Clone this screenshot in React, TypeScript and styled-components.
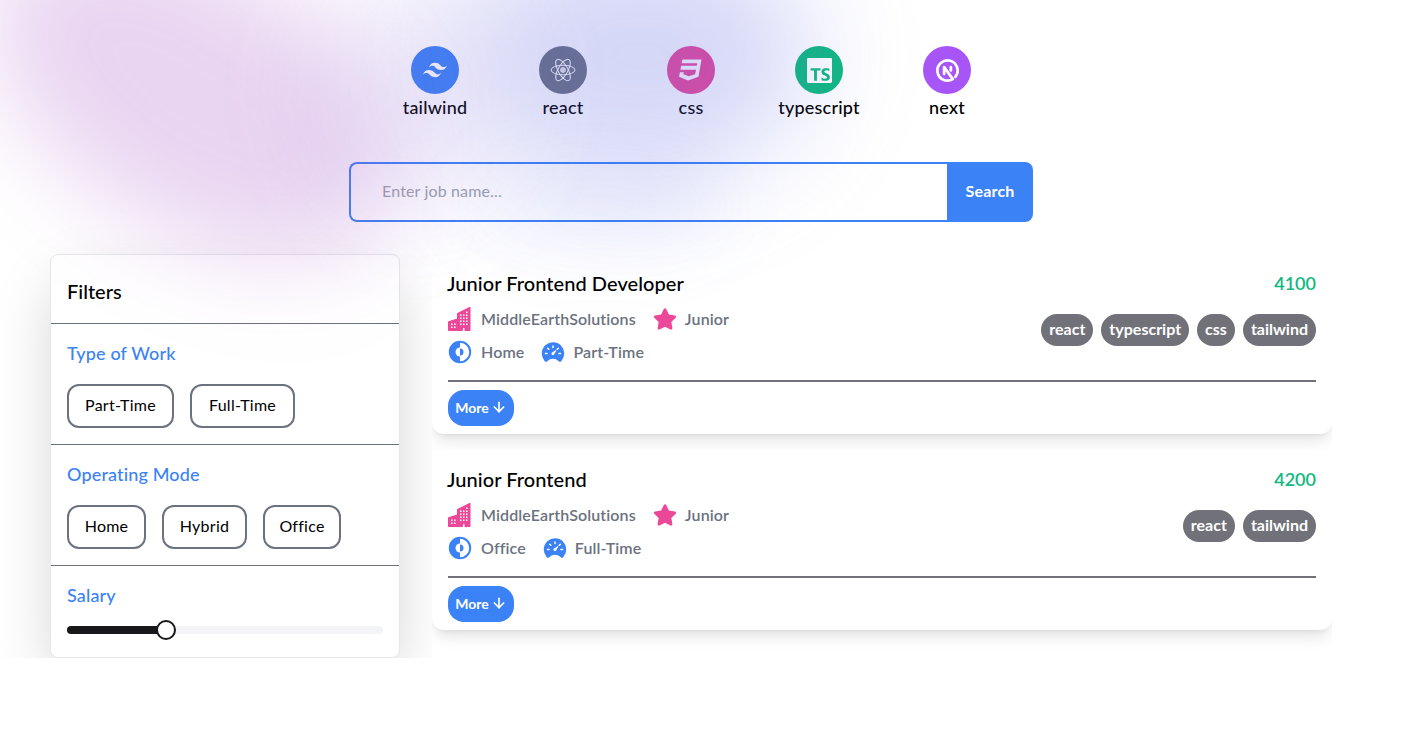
import React from "react";
import styled, { createGlobalStyle } from "styled-components";
import { SiTailwindcss, SiTypescript } from "react-icons/si";
import { FaCss3, FaStar } from "react-icons/fa";
import { TbBrandNextjs } from "react-icons/tb";
import { BsBuildingsFill } from "react-icons/bs";
import { IoSpeedometer } from "react-icons/io5";
import { ArrowDown } from "lucide-react";

const Global = createGlobalStyle`
  html, body { margin: 0; padding: 0; background: #fff; }
  body { font-family: "Lato", "Noto Sans", sans-serif; color: #000; }
  * { box-sizing: border-box; }
`;

const Page = styled.div`
  position: relative;
  width: 1382px;
  height: 658px;
  overflow: hidden;
  padding-top: 46px;
`;

const Blobs = styled.div`
  position: absolute;
  inset: 0;
  pointer-events: none;
  z-index: 5;
  overflow: hidden;
`;

const PinkBlob = styled.div`
  position: absolute;
  left: -35px;
  top: -35px;
  width: 450px;
  height: 260px;
  border-radius: 50%;
  transform: rotate(33deg);
  background: rgba(168, 85, 199, 0.25);
  filter: blur(48px);
`;

const MidBlob = styled.div`
  position: absolute;
  left: 320px;
  top: -30px;
  width: 190px;
  height: 240px;
  border-radius: 50%;
  background: rgba(130, 100, 220, 0.13);
  filter: blur(50px);
`;

const BlueBlob = styled.div`
  position: absolute;
  left: 470px;
  top: -70px;
  width: 340px;
  height: 250px;
  border-radius: 50%;
  background: rgba(91, 99, 224, 0.26);
  filter: blur(55px);
`;

const BlueTail = styled.div`
  position: absolute;
  left: 470px;
  top: 160px;
  width: 260px;
  height: 90px;
  border-radius: 50%;
  background: rgba(91, 99, 224, 0.08);
  filter: blur(35px);
`;

const TechRow = styled.div`
  display: flex;
  justify-content: center;
`;

const TechItem = styled.div`
  width: 128px;
  display: flex;
  flex-direction: column;
  align-items: center;
`;

const TechCircle = styled.div<{ $bg: string }>`
  width: 48px;
  height: 48px;
  border-radius: 50%;
  background: ${(p) => p.$bg};
  color: #fff;
  display: flex;
  align-items: center;
  justify-content: center;
`;

const TechLabel = styled.span`
  font-size: 18px;
  line-height: 26px;
  margin-bottom: 2px;
  font-weight: 500;
  letter-spacing: 0.2px;
  white-space: nowrap;
`;

const SearchBar = styled.form`
  display: flex;
  width: 684px;
  height: 60px;
  margin: 40px auto 32px;
`;

const SearchInput = styled.input`
  flex: 1;
  min-width: 0;
  border: 2px solid #3b82f6;
  border-right: none;
  border-radius: 8px 0 0 8px;
  padding: 0 32px 3px 31px;
  font: inherit;
  font-size: 16px;
  letter-spacing: 0.15px;
  background: #fff;
  outline: none;
  &::placeholder { color: #9ca3af; }
`;

const SearchButton = styled.button`
  width: 86px;
  border: none;
  border-radius: 0 8px 8px 0;
  background: #3b82f6;
  color: #fff;
  font: inherit;
  font-size: 16px;
  font-weight: 700;
  letter-spacing: 0.2px;
  padding: 0 0 3px;
`;

const Main = styled.div`
  display: flex;
  padding-left: 50px;
  gap: 32px;
  height: 404px;
`;

const Sidebar = styled.aside`
  width: 350px;
  height: 404px;
  flex: none;
  background: #fff;
  border: 1px solid #e5e7eb;
  border-radius: 8px;
  box-shadow: 0 25px 60px -8px rgba(0, 0, 0, 0.2);
`;

const SidebarTitle = styled.h2`
  margin: 0;
  height: 69px;
  padding: 22px 16px 0;
  font-size: 20px;
  line-height: 28px;
  font-weight: 500;
  border-bottom: 1px solid #6b7280;
`;

const Section = styled.section<{ $last?: boolean }>`
  height: ${(p) => (p.$last ? "auto" : "121px")};
  padding: 16px 16px 0;
  border-bottom: ${(p) => (p.$last ? "none" : "1px solid #6b7280")};
`;

const SectionTitle = styled.h3`
  margin: 0 0 18px;
  font-size: 18px;
  line-height: 26px;
  font-weight: 500;
  letter-spacing: 0.15px;
  color: #3b82f6;
`;

const Options = styled.div`
  display: flex;
  gap: 16px;
`;

const Option = styled.button<{ $w: number }>`
  width: ${(p) => p.$w}px;
  height: 44px;
  background: #fff;
  border: 2px solid #6b7280;
  border-radius: 12px;
  color: #000;
  font: inherit;
  font-size: 16px;
  letter-spacing: 0.25px;
  padding: 0 0 3px;
`;

const SliderTrack = styled.div`
  position: relative;
  width: 316px;
  height: 8px;
  border-radius: 4px;
  background: #f3f4f6;
`;

const SliderFill = styled.div`
  height: 100%;
  border-radius: 4px 0 0 4px;
  background: #18181b;
`;

const SliderThumb = styled.div`
  position: absolute;
  top: -6px;
  width: 20px;
  height: 20px;
  margin-left: -10px;
  border-radius: 50%;
  background: #fff;
  border: 2px solid #18181b;
`;

const JobList = styled.div`
  width: 900px;
  flex: none;
  height: 404px;
  overflow: hidden;
  background: #fff;
  display: flex;
  flex-direction: column;
  gap: 16px;
`;

const Card = styled.article`
  height: 180px;
  flex: none;
  background: #fff;
  border-radius: 12px;
  padding: 16px 16px 8px;
  box-shadow: 0 10px 15px -3px rgba(0, 0, 0, 0.1), 0 4px 6px -4px rgba(0, 0, 0, 0.1);
`;

const CardHead = styled.div`
  display: flex;
  justify-content: space-between;
  height: 28px;
  line-height: 26px;
`;

const JobTitle = styled.h4`
  margin: 0 0 0 -1px;
  font-size: 20px;
  font-weight: 500;
  letter-spacing: 0.06px;
`;

const Salary = styled.span`
  font-size: 18px;
  font-weight: 600;
  color: #10b981;
`;

const CardBody = styled.div`
  display: flex;
  justify-content: space-between;
  align-items: flex-start;
  height: 84px;
  border-bottom: 2px solid #71717a;
`;

const Meta = styled.div`
  display: flex;
  flex-direction: column;
  gap: 9px;
  padding-top: 9px;
`;

const MetaRow = styled.div`
  display: flex;
  align-items: center;
  gap: 17px;
  height: 24px;
`;

const MetaItem = styled.div`
  display: flex;
  align-items: center;
  gap: 8px;
  font-size: 16px;
  font-weight: 600;
  letter-spacing: 0.12px;
  color: #6b7280;
`;

const MetaText = styled.span<{ $lead?: boolean }>`
  display: block;
  margin-top: -2px;
  margin-left: ${(p) => (p.$lead ? "1px" : "0")};
`;

const Tags = styled.div`
  display: flex;
  gap: 8px;
  margin-top: 16px;
`;

const Tag = styled.span`
  height: 32px;
  line-height: 30px;
  padding: 0 8px;
  border-radius: 16px;
  background: #71717a;
  color: #fff;
  font-size: 16px;
  font-weight: 700;
`;

const MoreButton = styled.button`
  display: flex;
  align-items: center;
  justify-content: center;
  gap: 2px;
  width: 66px;
  height: 36px;
  margin-top: 8px;
  padding: 0 0 2px;
  border: none;
  border-radius: 16px;
  background: #3b82f6;
  color: #fff;
  font: inherit;
  font-size: 14px;
  font-weight: 700;
`;

const ReactAtom = () => (
  <svg width="28" height="28" viewBox="0 0 28 28" fill="none" stroke="#fff" strokeWidth="1">
    <ellipse cx="14" cy="14" rx="12" ry="4.8" />
    <ellipse cx="14" cy="14" rx="12" ry="4.8" transform="rotate(60 14 14)" />
    <ellipse cx="14" cy="14" rx="12" ry="4.8" transform="rotate(120 14 14)" />
    <circle cx="14" cy="14" r="2.4" fill="#fff" fillOpacity=".75" />
  </svg>
);

const ModeIcon = () => (
  <svg width="24" height="24" viewBox="0 0 24 24">
    <circle cx="12" cy="12" r="10.2" fill="#fff" stroke="#3b82f6" strokeWidth="2" />
    <path d="M12 2a10 10 0 0 0 0 20Z" fill="#3b82f6" />
    <path d="M12 7.5a4.5 4.5 0 0 0 0 9Z" fill="#fff" />
    <path d="M12 8.5a3.5 3.5 0 0 1 0 7Z" fill="#3b82f6" />
  </svg>
);

const techs = [
  { name: "tailwind", bg: "#3b82f6", icon: <SiTailwindcss size={24} /> },
  { name: "react", bg: "#6b7280", icon: <ReactAtom /> },
  { name: "css", bg: "#ec4899", icon: <FaCss3 size={24} /> },
  { name: "typescript", bg: "#10b981", icon: <SiTypescript size={25} /> },
  { name: "next", bg: "#a855f7", icon: <TbBrandNextjs size={27} strokeWidth={2.4} /> },
];

const jobs = [
  { title: "Junior Frontend Developer", salary: 4100, mode: "Home", type: "Part-Time", tags: ["react", "typescript", "css", "tailwind"] },
  { title: "Junior Frontend", salary: 4200, mode: "Office", type: "Full-Time", tags: ["react", "tailwind"] },
];

export default function App() {
  return (
    <Page>
      <Global />
      <TechRow>
        {techs.map((t) => (
          <TechItem key={t.name}>
            <TechCircle $bg={t.bg}>{t.icon}</TechCircle>
            <TechLabel>{t.name}</TechLabel>
          </TechItem>
        ))}
      </TechRow>
      <SearchBar>
        <SearchInput placeholder="Enter job name..." />
        <SearchButton type="button">Search</SearchButton>
      </SearchBar>
      <Main>
        <Sidebar>
          <SidebarTitle>Filters</SidebarTitle>
          <Section>
            <SectionTitle>Type of Work</SectionTitle>
            <Options>
              <Option $w={107}>Part-Time</Option>
              <Option $w={105}>Full-Time</Option>
            </Options>
          </Section>
          <Section>
            <SectionTitle>Operating Mode</SectionTitle>
            <Options>
              <Option $w={79}>Home</Option>
              <Option $w={85}>Hybrid</Option>
              <Option $w={78}>Office</Option>
            </Options>
          </Section>
          <Section $last>
            <SectionTitle>Salary</SectionTitle>
            <SliderTrack>
              <SliderFill style={{ width: "31.3%" }} />
              <SliderThumb style={{ left: "31.3%" }} />
            </SliderTrack>
          </Section>
        </Sidebar>
        <JobList>
          {jobs.map((j) => (
            <Card key={j.title}>
              <CardHead>
                <JobTitle>{j.title}</JobTitle>
                <Salary>{j.salary}</Salary>
              </CardHead>
              <CardBody>
                <Meta>
                  <MetaRow>
                    <MetaItem><BsBuildingsFill size={24} color="#ec4899" /><MetaText $lead>MiddleEarthSolutions</MetaText></MetaItem>
                    <MetaItem><FaStar size={24} color="#ec4899" /><MetaText>Junior</MetaText></MetaItem>
                  </MetaRow>
                  <MetaRow>
                    <MetaItem><ModeIcon /><MetaText $lead>{j.mode}</MetaText></MetaItem>
                    <MetaItem><IoSpeedometer size={24} color="#3b82f6" /><MetaText>{j.type}</MetaText></MetaItem>
                  </MetaRow>
                </Meta>
                <Tags>
                  {j.tags.map((t) => <Tag key={t}>{t}</Tag>)}
                </Tags>
              </CardBody>
              <MoreButton>More <ArrowDown size={16} strokeWidth={2.5} /></MoreButton>
            </Card>
          ))}
        </JobList>
      </Main>
      <Blobs>
        <PinkBlob />
        <MidBlob />
        <BlueBlob />
        <BlueTail />
      </Blobs>
    </Page>
  );
}
